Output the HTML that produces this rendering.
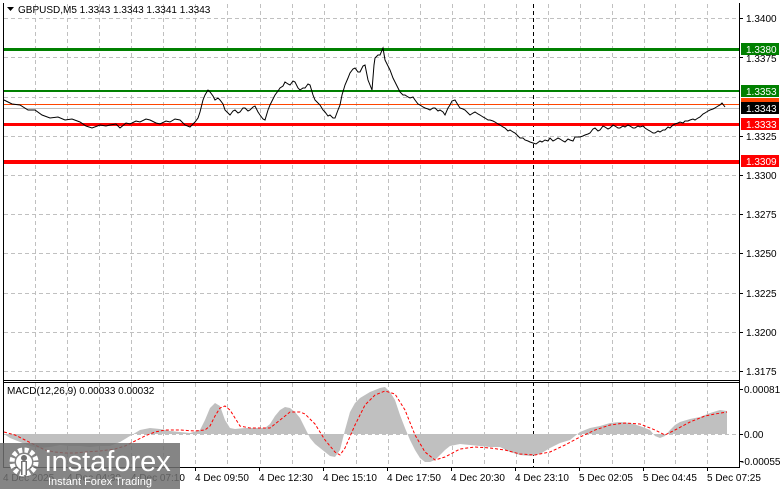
<!DOCTYPE html>
<html><head><meta charset="utf-8"><style>
html,body{margin:0;padding:0;background:#fff;width:781px;height:489px;overflow:hidden}
svg text{font-family:"Liberation Sans",sans-serif}
</style></head><body>
<svg width="781" height="489" viewBox="0 0 781 489" xmlns="http://www.w3.org/2000/svg">
<rect width="781" height="489" fill="#fff"/>
<g stroke="#c0c0c0" stroke-dasharray="4,3" stroke-width="1">
<path d="M35.5 4V380M67.5 4V380M99.5 4V380M131.5 4V380M163.5 4V380M195.5 4V380M227.5 4V380M260.5 4V380M292.5 4V380M324.5 4V380M356.5 4V380M388.5 4V380M420.5 4V380M452.5 4V380M484.5 4V380M516.5 4V380M548.5 4V380M580.5 4V380M612.5 4V380M644.5 4V380M675.5 4V380M707.5 4V380"/>
<path d="M35.5 383V467M67.5 383V467M99.5 383V467M131.5 383V467M163.5 383V467M195.5 383V467M227.5 383V467M260.5 383V467M292.5 383V467M324.5 383V467M356.5 383V467M388.5 383V467M420.5 383V467M452.5 383V467M484.5 383V467M516.5 383V467M548.5 383V467M580.5 383V467M612.5 383V467M644.5 383V467M675.5 383V467M707.5 383V467"/>
<path d="M4 18.5H739M4 57.5H739M4 97.5H739M4 136.5H739M4 175.5H739M4 214.5H739M4 253.5H739M4 293.5H739M4 332.5H739M4 371.5H739M4 434.5H739"/>
</g>
<path d="M533.5 4V467" stroke="#000" stroke-dasharray="4,3"/>
<rect x="4" y="48" width="735" height="3" fill="#008000"/>
<rect x="4" y="90" width="735" height="2" fill="#008000"/>
<rect x="4" y="104" width="735" height="1" fill="#ff4500"/>
<rect x="4" y="108" width="735" height="1" fill="#c0c0c0"/>
<rect x="4" y="123" width="735" height="3" fill="#ff0000"/>
<rect x="4" y="160" width="735" height="4" fill="#ff0000"/>
<polyline fill="none" stroke="#000" stroke-width="1" points="4,100 12,104 20,105 28,110 35,110 42,115 50,118 58,117 65,120 72,119 80,122 86,126 92,128 100,125 106,126 110,125 116,124 120,128 126,123 130,124 136,121 140,122 146,119 150,120 156,123 160,124 166,121 170,122 175,119 180,120 185,125 190,127 195,122 198,118 200,112 203,100 205,95 208,90 210,92 213,96 215,100 218,98 220,100 223,104 225,110 228,113 230,115 233,111 235,110 238,113 240,112 243,108 245,108 248,111 250,110 253,107 255,106 258,112 260,115 263,119 265,120 268,110 270,105 273,99 275,95 278,91 280,88 283,86 285,82 288,84 290,85 293,81 295,82 298,88 300,90 303,88 305,88 308,84 310,85 313,95 315,100 318,103 320,105 323,110 325,112 328,116 330,115 333,118 335,118 338,110 340,105 342,95 345,85 348,78 350,73 353,69 355,68 358,72 360,72 363,66 365,65 368,80 370,85 372,90 374,65 375,58 378,55 380,55 383,48 385,60 388,66 390,70 393,78 395,82 398,88 400,92 403,95 405,95 408,97 410,98 413,97 415,100 418,104 420,105 423,107 425,108 428,109 430,110 433,108 435,108 438,111 440,110 443,112 445,115 448,108 450,105 452,101 455,100 458,105 460,108 463,109 465,110 468,113 470,115 473,113 475,112 478,114 480,115 483,117 485,118 488,120 490,120 493,121 495,122 498,124 500,125 503,127 505,128 508,131 510,130 513,132 515,133 518,136 520,138 523,138 525,140 528,141 530,142 533,143 536,144 540,141 542,142 545,140 548,141 550,138 553,141 555,140 558,138 560,139 563,141 565,142 568,139 570,140 573,141 575,137 578,137 580,137 583,136 585,135 588,134 590,133 593,129 595,128 598,131 600,130 603,126 605,127 608,129 610,128 613,125 615,126 618,128 620,128 623,126 625,127 628,125 630,126 633,128 635,128 638,126 640,127 643,126 645,128 648,130 650,131 653,133 655,133 658,131 660,132 663,130 665,130 668,127 670,128 673,125 675,124 678,123 680,122 683,123 685,121 688,121 690,120 693,119 695,120 698,118 700,117 703,114 705,113 708,111 710,110 713,109 715,108 718,106 720,105 722,103 725,107"/>
<polygon fill="#c0c0c0" points="4,434 10,438 20,442 30,446 40,448 50,447 60,445 70,446 80,446 90,447 100,446 110,446 120,442 130,436 140,430 150,428 160,429 170,431 180,432 190,433 200,430 205,420 210,408 215,403 220,406 225,420 230,428 235,429 245,428 255,428 265,428 270,424 275,416 280,410 285,407 290,408 295,412 300,418 305,428 310,438 315,444 320,448 325,452 330,456 335,457 340,450 345,430 350,412 355,403 360,398 365,395 370,392 375,390 380,388 385,387 390,392 395,400 400,415 405,428 410,440 415,450 420,458 425,462 430,462 435,460 440,455 445,450 450,446 460,444 470,445 480,446 490,447 500,447 510,452 520,455 530,456 540,454 550,448 560,443 570,440 580,432 590,428 600,426 610,423 620,422 630,423 640,426 650,430 655,436 660,438 665,436 670,430 675,425 680,422 690,419 700,417 710,413 720,410 727,411 727,434"/>
<polyline fill="none" stroke="#ff0000" stroke-dasharray="3,2" stroke-width="1" points="4,432 15,435 25,440 35,445 45,450 55,452 65,453 75,453 85,452 100,451 115,449 125,446 135,441 145,436 155,432 165,430 180,430 195,431 205,430 210,426 215,416 220,408 225,406 230,410 235,418 240,426 250,428 260,428 270,428 280,420 290,412 300,412 305,414 315,424 325,440 335,452 340,455 345,448 355,425 365,405 375,395 385,391 395,394 405,410 415,435 425,452 435,460 445,457 460,449 475,447 490,448 505,450 520,454 535,455 550,452 565,445 580,437 595,430 610,425 625,423 640,424 655,430 665,435 675,430 690,422 705,416 715,414 727,412"/>
<g stroke="#000" fill="none">
<path d="M3.5 3V468M739.5 3V468M3 380.5H740M3 382.5H740M3 467.5H740"/>
</g>
<path d="M739 18.5h4M739 57.5h4M739 136.5h4M739 175.5h4M739 214.5h4M739 253.5h4M739 293.5h4M739 332.5h4M739 371.5h4M739 389.5h4M739 434.5h4M739 461.5h4" stroke="#000"/>
<path d="M7 7h7l-3.5 4z" fill="#000"/>
<text x="18" y="13" font-size="10" fill="#000">GBPUSD,M5  1.3343 1.3343 1.3341 1.3343</text>
<text x="7" y="394" font-size="10" fill="#000">MACD(12,26,9) 0.00033 0.00032</text>
<g font-size="10" fill="#000">
<text x="746" y="22">1.3400</text>
<text x="746" y="62">1.3375</text>
<text x="746" y="140">1.3325</text>
<text x="746" y="179">1.3300</text>
<text x="746" y="218">1.3275</text>
<text x="746" y="257">1.3250</text>
<text x="746" y="297">1.3225</text>
<text x="746" y="336">1.3200</text>
<text x="746" y="375">1.3175</text>
<text x="744" y="393">0.00081</text>
<text x="744" y="438">0.00</text>
<text x="741" y="465">-0.00055</text>
</g>
<rect x="741" y="43" width="38" height="12" fill="#008000"/><text x="746" y="53" font-size="10" fill="#fff">1.3380</text>
<rect x="741" y="85" width="38" height="12" fill="#008000"/><text x="746" y="95" font-size="10" fill="#fff">1.3353</text>
<rect x="741" y="98" width="38" height="6" fill="#ff4500"/>
<rect x="741" y="102" width="38" height="12" fill="#000"/><text x="746" y="112" font-size="10" fill="#fff">1.3343</text>
<rect x="741" y="118" width="38" height="12" fill="#ff0000"/><text x="746" y="128" font-size="10" fill="#fff">1.3333</text>
<rect x="741" y="155" width="38" height="12" fill="#ff0000"/><text x="746" y="165" font-size="10" fill="#fff">1.3309</text>
<g font-size="10" fill="#000">
<text x="3" y="481">4 Dec 2025</text>
<text x="67" y="481">4 Dec 04:30</text>
<text x="131" y="481">4 Dec 07:10</text>
<text x="195" y="481">4 Dec 09:50</text>
<text x="259" y="481">4 Dec 12:30</text>
<text x="323" y="481">4 Dec 15:10</text>
<text x="387" y="481">4 Dec 17:50</text>
<text x="451" y="481">4 Dec 20:30</text>
<text x="515" y="481">4 Dec 23:10</text>
<text x="579" y="481">5 Dec 02:05</text>
<text x="643" y="481">5 Dec 04:45</text>
<text x="707" y="481">5 Dec 07:25</text>
</g>
<path d="M195.5 468v3M259.5 468v3M323.5 468v3M387.5 468v3M451.5 468v3M515.5 468v3M579.5 468v3M643.5 468v3M707.5 468v3" stroke="#000"/>
<rect x="0" y="443" width="180" height="46" fill="#707070" opacity="0.85"/>
<g fill="#fff">
<circle cx="24" cy="462" r="12" fill="none" stroke="#fff" stroke-width="5" stroke-dasharray="4,2.3"/>
<circle cx="24" cy="462" r="8"/>
<circle cx="24" cy="458" r="3" fill="#707070"/>
<rect x="21" y="461" width="6" height="14" fill="#707070"/>
<rect x="22.5" y="462" width="3" height="13"/>
</g>
<text x="45" y="471" font-size="29" fill="#fff">instaforex</text>
<text x="48" y="485" font-size="11" fill="#fff">Instant Forex Trading</text>
</svg>
</body></html>
